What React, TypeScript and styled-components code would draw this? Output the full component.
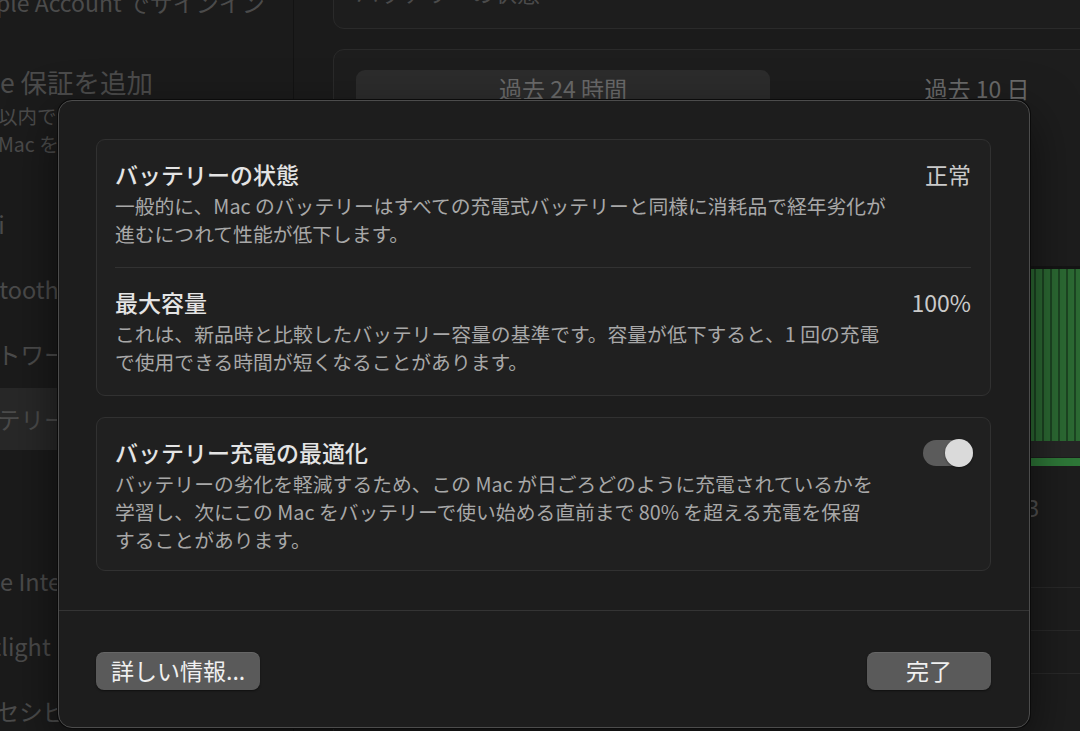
import { createGlobalStyle, styled } from 'styled-components';

const GlobalStyle = createGlobalStyle`
  html, body {
    margin: 0;
    padding: 0;
    background: #1b1b1b;
    overflow: hidden;
  }
  body {
    font-family: "Noto Sans CJK JP", "Noto Sans", sans-serif;
    -webkit-font-smoothing: antialiased;
  }
`;

const StyledWindow = styled.div`
  position: relative;
  display: flex;
  width: 1080px;
  height: 731px;
  overflow: hidden;
  background: #1b1b1b;
`;

/* ---------- sidebar (dimmed, behind the sheet) ---------- */

const StyledSidebar = styled.aside`
  width: 293px;
  flex-shrink: 0;
  display: flex;
  flex-direction: column;
  border-right: 1px solid #131313;
  overflow: hidden;
  color: #4b4b4b;
  white-space: nowrap;
`;

const StyledSignIn = styled.div`
  margin-top: -13px;
  margin-left: -4px;
  font-size: 23px;
  line-height: 30px;
`;

const StyledPromo = styled.div`
  margin-top: 48px;
  display: flex;
  flex-direction: column;
`;

const StyledPromoTitle = styled.div`
  font-size: 26.5px;
  line-height: 34px;
  margin-bottom: 3px;
`;

const StyledPromoText = styled.div`
  font-size: 19.5px;
  line-height: 28px;
  margin-left: -2px;
`;

const StyledNavList = styled.ul`
  list-style: none;
  margin: 35px 0 0;
  padding: 0;
  display: flex;
  flex-direction: column;
  gap: 3px;
`;

const StyledNavItem = styled.li<{ $selected?: boolean; $gapBefore?: number }>`
  height: 62px;
  display: flex;
  align-items: center;
  margin-top: ${(p) => p.$gapBefore ?? 0}px;
  background: ${(p) => (p.$selected ? '#282828' : 'transparent')};
  font-size: 23.5px;
`;

const StyledNavLabel = styled.span`
  margin-left: -50px;
`;

/* ---------- main content (dimmed, behind the sheet) ---------- */

const StyledMain = styled.main`
  flex: 1;
  min-width: 0;
  display: flex;
  flex-direction: column;
  gap: 20px;
  padding-left: 39px;
  overflow: hidden;
`;

const StyledBgCard = styled.section`
  width: 900px;
  flex-shrink: 0;
  border: 1px solid #2a2a2a;
  border-radius: 11px;
  background: #1d1d1d;
`;

const StyledStatusCard = styled(StyledBgCard)`
  margin-top: -40px;
  height: 69px;
  box-sizing: border-box;
  padding: 16px 22px;
  color: #4b4b4b;
  font-size: 23px;
  line-height: 30px;
`;

const StyledChartCard = styled(StyledBgCard)`
  padding: 20px 22px;
  height: 800px;
`;

const StyledSegmented = styled.div`
  display: flex;
  width: 828px;
  height: 40px;
`;

const StyledSegment = styled.div<{ $active?: boolean }>`
  flex: 1;
  display: flex;
  align-items: center;
  justify-content: center;
  border-radius: 9px;
  background: ${(p) => (p.$active ? '#2c2c2c' : 'transparent')};
  color: #6a6a6a;
  font-size: 23px;
  padding-bottom: 5px;
`;

const StyledChart = styled.svg`
  display: block;
  margin-top: 141px;
`;

/* ---------- sheet ---------- */

const StyledSheet = styled.div`
  position: absolute;
  left: 58px;
  top: 100px;
  width: 972px;
  box-sizing: border-box;
  border: 1px solid #4c4c4c;
  border-radius: 14px;
  background: #1d1d1d;
  box-shadow: 0 0 0 1px #0b0b0b, 0 18px 50px rgba(0, 0, 0, 0.55);
  overflow: hidden;
`;

const StyledSheetBody = styled.div`
  display: flex;
  flex-direction: column;
  gap: 21px;
  padding: 38px 38px 39px 37px;
`;

const StyledGroup = styled.div`
  border: 1px solid #313131;
  border-radius: 9px;
  background: #202020;
`;

const StyledRow = styled.div<{ $gap?: number }>`
  display: flex;
  align-items: flex-start;
  gap: 20px;
  padding: 19px 19px ${(p) => p.$gap ?? 19}px 18px;
`;

const StyledRowText = styled.div`
  flex: 1;
  min-width: 0;
`;

const StyledTitle = styled.div`
  color: #e4e4e4;
  font-size: 23px;
  line-height: 30px;
  font-weight: 500;
`;

const StyledDesc = styled.div`
  margin-top: 3px;
  color: #a8a8a8;
  font-size: 19.8px;
  line-height: 28px;
  white-space: nowrap;
`;

const StyledValue = styled.div`
  color: #cacaca;
  font-size: 23px;
  line-height: 30px;
`;

const StyledDivider = styled.div`
  height: 1px;
  margin: 0 19px 0 18px;
  background: #323232;
`;

const StyledToggle = styled.div<{ $on?: boolean }>`
  width: 50px;
  height: 26px;
  margin-top: 3px;
  margin-right: -2px;
  border-radius: 13px;
  background: #5b5b5b;
  display: flex;
  align-items: center;
  justify-content: ${(p) => (p.$on ? 'flex-end' : 'flex-start')};
`;

const StyledKnob = styled.div`
  width: 28px;
  height: 28px;
  flex-shrink: 0;
  border-radius: 50%;
  background: #dadada;
  box-shadow: 0 1px 2px rgba(0, 0, 0, 0.4);
`;

const StyledSheetDivider = styled.div`
  height: 1px;
  background: #343434;
`;

const StyledFooter = styled.div`
  display: flex;
  justify-content: space-between;
  padding: 41px 38px 37px 37px;
`;

const StyledButton = styled.button`
  height: 38px;
  min-width: 124px;
  padding: 0 15px 2px;
  border: none;
  border-radius: 8px;
  background: #5a5a5a;
  box-shadow: inset 0 1px 0 rgba(255, 255, 255, 0.08), 0 1px 2px rgba(0, 0, 0, 0.5);
  color: #f0f0f0;
  font-family: inherit;
  font-size: 23px;
`;

interface NavEntry {
  label: string;
  selected?: boolean;
  gapBefore?: number;
}

const navEntries: NavEntry[] = [
  { label: 'Wi-Fi' },
  { label: 'Bluetooth' },
  { label: 'ネットワーク' },
  { label: 'バッテリー', selected: true },
  { label: '一般', gapBefore: 32 },
  { label: 'Apple Intelligence と Siri' },
  { label: 'Spotlight' },
  { label: 'アクセシビリティ' },
];

const BatteryChart = () => {
  const bars = [];
  for (let x = 0; x < 860; x += 8) {
    bars.push(<rect key={x} x={x} y={18} width={6} height={172} fill="#2c6a33" />);
  }
  return (
    <StyledChart width={860} height={440} viewBox="0 0 860 440">
      <rect x={0} y={15} width={860} height={3} fill="#151515" />
      <rect x={0} y={18} width={860} height={172} fill="#1c4522" />
      {bars}
      <rect x={0} y={190} width={860} height={16} fill="#262626" />
      <rect x={0} y={207} width={860} height={8} fill="#2e7838" />
      <text x={670} y={266} fill="#525252" fontSize={23} fontFamily="Noto Sans, sans-serif">
        3
      </text>
      {[336, 379, 422].map((y) => (
        <rect key={y} x={0} y={y} width={860} height={1} fill="#292929" />
      ))}
    </StyledChart>
  );
};

export default function App() {
  return (
    <>
      <GlobalStyle />
      <StyledWindow>
        <StyledSidebar>
          <StyledSignIn>ple Account でサインイン</StyledSignIn>
          <StyledPromo>
            <StyledPromoTitle>e 保証を追加</StyledPromoTitle>
            <StyledPromoText>以内であれば</StyledPromoText>
            <StyledPromoText>Mac を保護</StyledPromoText>
          </StyledPromo>
          <StyledNavList>
            {navEntries.map((item) => (
              <StyledNavItem key={item.label} $selected={item.selected} $gapBefore={item.gapBefore}>
                <StyledNavLabel>{item.label}</StyledNavLabel>
              </StyledNavItem>
            ))}
          </StyledNavList>
        </StyledSidebar>

        <StyledMain>
          <StyledStatusCard>バッテリーの状態</StyledStatusCard>
          <StyledChartCard>
            <StyledSegmented>
              <StyledSegment $active>過去 24 時間</StyledSegment>
              <StyledSegment>過去 10 日</StyledSegment>
            </StyledSegmented>
            <BatteryChart />
          </StyledChartCard>
        </StyledMain>

        <StyledSheet>
          <StyledSheetBody>
            <StyledGroup>
              <StyledRow>
                <StyledRowText>
                  <StyledTitle>バッテリーの状態</StyledTitle>
                  <StyledDesc>
                    一般的に、Mac のバッテリーはすべての充電式バッテリーと同様に消耗品で経年劣化が
                    <br />
                    進むにつれて性能が低下します。
                  </StyledDesc>
                </StyledRowText>
                <StyledValue>正常</StyledValue>
              </StyledRow>
              <StyledDivider />
              <StyledRow>
                <StyledRowText>
                  <StyledTitle>最大容量</StyledTitle>
                  <StyledDesc>
                    これは、新品時と比較したバッテリー容量の基準です。容量が低下すると、1 回の充電
                    <br />
                    で使用できる時間が短くなることがあります。
                  </StyledDesc>
                </StyledRowText>
                <StyledValue>100%</StyledValue>
              </StyledRow>
            </StyledGroup>

            <StyledGroup>
              <StyledRow $gap={16}>
                <StyledRowText>
                  <StyledTitle>バッテリー充電の最適化</StyledTitle>
                  <StyledDesc>
                    バッテリーの劣化を軽減するため、この Mac が日ごろどのように充電されているかを
                    <br />
                    学習し、次にこの Mac をバッテリーで使い始める直前まで 80% を超える充電を保留
                    <br />
                    することがあります。
                  </StyledDesc>
                </StyledRowText>
                <StyledToggle $on>
                  <StyledKnob />
                </StyledToggle>
              </StyledRow>
            </StyledGroup>
          </StyledSheetBody>
          <StyledSheetDivider />
          <StyledFooter>
            <StyledButton>詳しい情報...</StyledButton>
            <StyledButton>完了</StyledButton>
          </StyledFooter>
        </StyledSheet>
      </StyledWindow>
    </>
  );
}
